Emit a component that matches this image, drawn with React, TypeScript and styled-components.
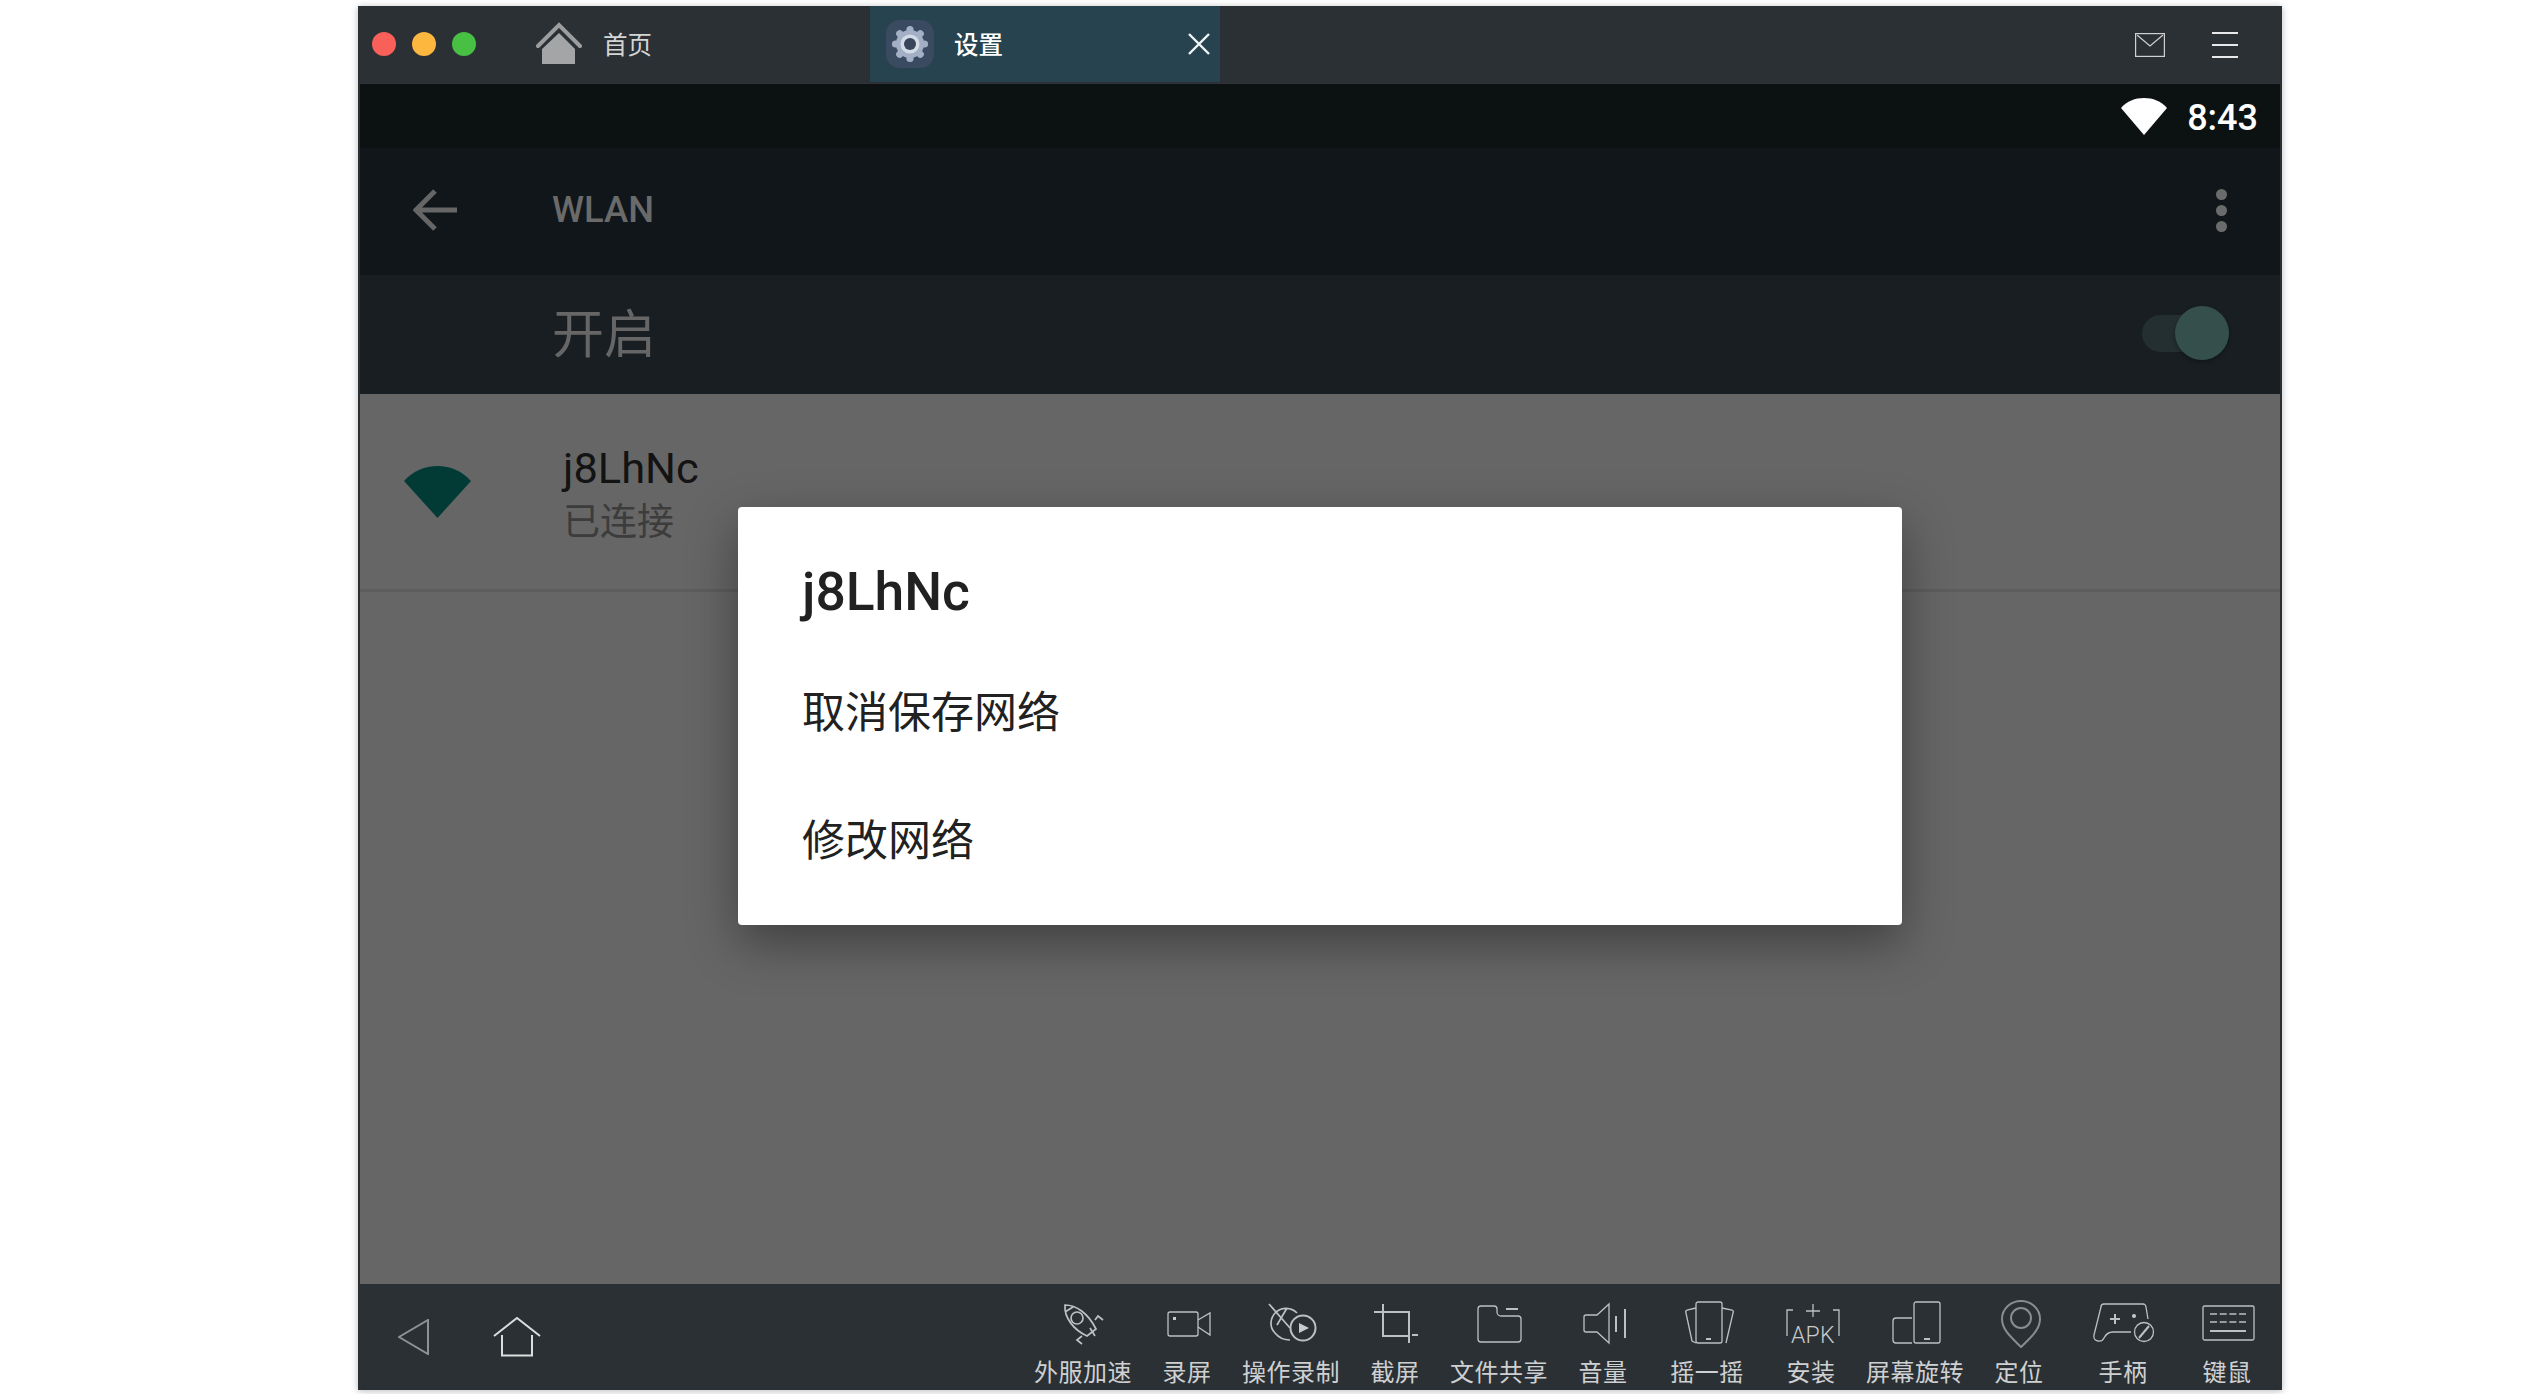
import React from "react";
import styled, { createGlobalStyle } from "styled-components";

const Global = createGlobalStyle`
  html, body { margin: 0; padding: 0; background: #fff; }
  body { font-family: Roboto, "Noto Sans CJK SC", sans-serif; }
  * { box-sizing: border-box; }
`;

const Page = styled.div`
  width: 2530px;
  height: 1394px;
  padding: 6px 0 4px 358px;
  overflow: hidden;
`;
const Window = styled.div`
  width: 1924px;
  height: 1384px;
  display: flex;
  flex-direction: column;
  background: #2b3035;
  padding: 0 2px;
  box-shadow: 0 1px 7px rgba(0, 0, 0, 0.28);
`;
const TitleBar = styled.header`
  height: 78px;
  margin: 0 -2px;
  display: flex;
  align-items: flex-start;
  background: #2b3035;
  border-bottom: 1px solid #313539;
  flex: none;
`;
const Lights = styled.div`
  display: flex;
  gap: 16px;
  padding: 26px 0 0 14px;
  width: 178px;
  flex: none;
`;
const Light = styled.span<{ $color: string }>`
  width: 24px;
  height: 24px;
  border-radius: 50%;
  background: ${(p) => p.$color};
`;
const HomeTab = styled.div`
  width: 334px;
  height: 77px;
  display: flex;
  align-items: center;
  gap: 21px;
  color: #d4d5d6;
  font: 400 24.5px/30px "Noto Sans CJK SC", sans-serif;
  padding-bottom: 1px;
  flex: none;
`;
const ActiveTab = styled.div`
  width: 350px;
  height: 76px;
  display: flex;
  align-items: center;
  background: #284350;
  color: #fff;
  font: 500 24.5px/30px "Noto Sans CJK SC", sans-serif;
  padding: 0 9px 0 16px;
  flex: none;
  svg:first-child { margin-right: 20px; }
`;
const TabLabel = styled.span`
  flex: 1;
`;
const TitleActions = styled.div`
  margin-left: auto;
  height: 77px;
  padding-right: 44px;
  display: flex;
  align-items: center;
  gap: 47px;
`;
const MenuIcon = styled.div`
  width: 26px;
  height: 26px;
  display: flex;
  flex-direction: column;
  justify-content: space-between;
  span { height: 2px; background: #e8e8e8; }
`;
const StatusBar = styled.div`
  height: 64px;
  background: #0c1112;
  display: flex;
  align-items: center;
  justify-content: flex-end;
  gap: 20px;
  padding-right: 22px;
  color: #fff;
  font: 500 36px/42px Roboto, sans-serif;
  flex: none;
`;
const StatusTime = styled.span`
  position: relative;
  top: 2px;
`;
const ActionBar = styled.div`
  height: 127px;
  background: #101619;
  display: flex;
  align-items: center;
  color: #6a6a6a;
  font: 500 36.4px/42px Roboto, sans-serif;
  flex: none;
  padding-bottom: 3px;
`;
const BackSlot = styled.div`
  width: 192px;
  padding-left: 53px;
  display: flex;
  flex: none;
`;
const Dots = styled.div`
  margin-left: auto;
  margin-right: 53px;
  display: flex;
  flex-direction: column;
  gap: 5px;
  span { width: 11px; height: 11px; border-radius: 50%; background: #6b6b6b; }
`;
const SwitchRow = styled.div`
  height: 119px;
  background: #181e22;
  display: flex;
  align-items: center;
  padding-left: 192px;
  color: #666;
  font: 400 52px/64px "Noto Sans CJK SC", sans-serif;
  flex: none;
`;
const SwitchLabel = styled.span`
  position: relative;
  top: -4px;
`;
const Switch = styled.div`
  margin-left: auto;
  margin-right: 51px;
  margin-top: -3px;
  width: 87px;
  height: 54px;
  display: flex;
  align-items: center;
  position: relative;
`;
const Track = styled.div`
  width: 60px;
  height: 37px;
  border-radius: 19px;
  background: #232f30;
`;
const Thumb = styled.div`
  position: absolute;
  right: 0;
  top: 0;
  width: 54px;
  height: 54px;
  border-radius: 50%;
  background: #35504c;
  box-shadow: 0 2px 4px rgba(0, 0, 0, 0.3);
`;
const Content = styled.main`
  flex: 1;
  position: relative;
  background: #666;
`;
const NetworkRow = styled.div`
  height: 198px;
  border-bottom: 3px solid #5d5d5d;
  display: flex;
  align-items: center;
  padding-left: 44px;
  gap: 92px;
`;
const NetworkText = styled.div`
  display: flex;
  flex-direction: column;
  padding-top: 6px;
`;
const NetworkName = styled.div`
  color: #131313;
  font: 400 43.4px/48px Roboto, sans-serif;
`;
const NetworkState = styled.div`
  color: #3c3c3c;
  font: 400 37px/52px "Noto Sans CJK SC", sans-serif;
`;
const Dialog = styled.div`
  position: absolute;
  left: 378px;
  top: 113px;
  width: 1164px;
  height: 418px;
  background: #fff;
  border-radius: 4px;
  box-shadow: 0 18px 50px rgba(0, 0, 0, 0.38);
  padding: 53px 64px 0;
`;
const DialogTitle = styled.h2`
  margin: 0 0 20.5px;
  color: #212121;
  font: 500 53.4px/64px Roboto, sans-serif;
`;
const DialogItem = styled.div`
  height: 128px;
  display: flex;
  align-items: center;
  color: #212121;
  font: 400 43px/60px "Noto Sans CJK SC", sans-serif;
`;
const BottomBar = styled.footer`
  height: 106px;
  margin: 0 -2px;
  padding-right: 3px;
  display: flex;
  background: #2b3035;
  flex: none;
`;
const Nav = styled.div`
  display: flex;
  align-items: center;
  gap: 63px;
  padding: 0 0 0 40px;
`;
const Tools = styled.div`
  margin-left: auto;
  display: flex;
`;
const Tool = styled.div`
  width: 104px;
  padding-top: 16px;
  display: flex;
  flex-direction: column;
  align-items: center;
  gap: 8px;
  color: #cfd0d1;
  font: 400 24px/30px "Noto Sans CJK SC", sans-serif;
  letter-spacing: 0.55px;
  white-space: nowrap;
`;
const ToolIcon = styled.svg`
  width: 104px;
  height: 48px;
  fill: none;
  stroke: #bfc0c1;
  stroke-width: 1.3;
  flex: none;
`;
const ApkText = styled.text`
  fill: #c9cacb;
  stroke: none;
  font: 300 23px Roboto, sans-serif;
`;

const icons: React.ReactNode[] = [
  <g strokeWidth="1.7">
    <path d="M34 5C45 5 57 13 65 29L56 36C43 30 33 18 34 5ZM34 12L42 7" />
    <circle cx="46" cy="18" r="6" />
    <path d="M64 20L67 16L72 20M51 36L46 40L51 44M59 28L64 36" />
  </g>,
  <>
    <rect x="33" y="12" width="30" height="24" rx="2" />
    <path d="M63 20L75 13V35L63 27" />
    <rect x="38" y="17" width="3" height="3" fill="#c9cacb" stroke="none" />
  </>,
  <g strokeWidth="1.7">
    <path d="M30 4L51 28M37 12C31 18 30 27 36 33C40 38 46 40 51 40M37 12C43 7 52 7 58 13M48 8L38 25" />
    <circle cx="64" cy="28" r="12.5" strokeWidth="2" />
    <path d="M60 23L70 28L60 33Z" fill="#c9cacb" stroke="none" />
  </g>,
  <path d="M31 12H67M40 4V36H66M66 12V43M69 35H75" strokeWidth="2" />,
  <>
    <path d="M31 9A3 3 0 0 1 34 6H47A3 3 0 0 1 50 9V12A4 4 0 0 0 54 16H71A3 3 0 0 1 74 19V39A3 3 0 0 1 71 42H34A3 3 0 0 1 31 39Z" />
    <path d="M59 9H71" strokeWidth="2" />
  </>,
  <>
    <path d="M58 4L46 15H35A2 2 0 0 0 33 17V30A2 2 0 0 0 35 32H46L58 43Z" />
    <path d="M65 16V32M74 9V38" strokeWidth="2" />
  </>,
  <>
    <rect x="41" y="2" width="26" height="41" rx="2" />
    <path d="M41 8L32 10Q30 11 31 13L37 41L41 43M67 8L77 10Q79 11 78 13L71 43" />
    <path d="M51 39H56" strokeWidth="2" />
  </>,
  <>
    <path d="M34 10H28V36M74 10H80V36M54 4V17M47 11H61" />
    <ApkText x="32" y="43" textLength="44">APK</ApkText>
  </>,
  <>
    <rect x="51" y="2" width="26" height="41" rx="2" />
    <path d="M49 18H33A3 3 0 0 0 30 21V40A3 3 0 0 0 33 43H49" />
    <path d="M61 39H67" strokeWidth="2" />
  </>,
  <>
    <path d="M54 47C45 38 35 30 35 19A19 18 0 0 1 73 19C73 30 63 38 54 47Z" stroke="#8a8c8e" strokeWidth="2" />
    <circle cx="54" cy="18" r="10" stroke="#8a8c8e" strokeWidth="2" />
  </>,
  <>
    <path d="M77 19L75 7A3 3 0 0 0 72 4H33A3 3 0 0 0 30 7L23 35Q22 40 27 41Q31 42 33 38Q36 32 42 32H60" />
    <path d="M39 19H49M44 14V24" strokeWidth="2" />
    <circle cx="63" cy="16" r="2" fill="#c9cacb" stroke="none" />
    <circle cx="73" cy="32" r="9.5" />
    <path d="M68 38L78 26" strokeWidth="2" />
  </>,
  <>
    <rect x="28" y="6" width="51" height="34" rx="1.5" />
    <path d="M35 14H71M35 22H71" strokeDasharray="7 2.7" strokeWidth="1.6" />
    <path d="M35 31H71" strokeWidth="2" />
  </>,
];

const labels = ["外服加速", "录屏", "操作录制", "截屏", "文件共享", "音量", "摇一摇", "安装", "屏幕旋转", "定位", "手柄", "键鼠"];

const gearTeeth = Array.from({ length: 8 }, (_, i) => i * 45);

export default function App() {
  return (
    <Page>
      <Global />
      <Window>
        <TitleBar>
          <Lights>
            <Light $color="#f9605a" />
            <Light $color="#fdb63e" />
            <Light $color="#47c043" />
          </Lights>
          <HomeTab>
            <svg width="46" height="44" viewBox="0 0 46 44">
              <path d="M2 24L23 3L44 24" fill="none" stroke="#9b9d9e" strokeWidth="4" strokeLinecap="round" />
              <path d="M23 11L39 27V42H6V27Z" fill="#a3a5a6" />
            </svg>
            首页
          </HomeTab>
          <ActiveTab>
            <svg width="48" height="48" viewBox="0 0 48 48">
              <rect width="48" height="48" rx="14" fill="#3a4a60" />
              {gearTeeth.map((a) => (
                <circle key={a} cx="24" cy="9.5" r="3.6" fill="#a3afc4" transform={`rotate(${a} 24 24)`} />
              ))}
              <circle cx="24" cy="24" r="14" fill="#a3afc4" />
              <circle cx="24" cy="24" r="9.5" fill="#d3dbe8" />
              <circle cx="24" cy="24" r="6" fill="#37445a" />
            </svg>
            <TabLabel>设置</TabLabel>
            <svg width="24" height="24" viewBox="0 0 24 24">
              <path d="M2 2L22 22M22 2L2 22" stroke="#f2f5f6" strokeWidth="2.4" />
            </svg>
          </ActiveTab>
          <TitleActions>
            <svg width="30" height="24" viewBox="0 0 30 24" fill="none" stroke="#cfd0d1" strokeWidth="1.2">
              <rect x="0.6" y="0.6" width="28.8" height="22.8" />
              <path d="M2 2L15 13L28 2" />
            </svg>
            <MenuIcon>
              <span />
              <span />
              <span />
            </MenuIcon>
          </TitleActions>
        </TitleBar>
        <StatusBar>
          <svg width="46" height="37" viewBox="0 0 46 37">
            <path d="M23 37L0 10C6 3 14 0 23 0S40 3 46 10Z" fill="#fff" />
          </svg>
          <StatusTime>8:43</StatusTime>
        </StatusBar>
        <ActionBar>
          <BackSlot>
            <svg width="44" height="42" viewBox="0 0 44 42" fill="none" stroke="#666" strokeWidth="5">
              <path d="M44 21H4M22 2L3 21L22 40" />
            </svg>
          </BackSlot>
          WLAN
          <Dots>
            <span />
            <span />
            <span />
          </Dots>
        </ActionBar>
        <SwitchRow>
          <SwitchLabel>开启</SwitchLabel>
          <Switch>
            <Track />
            <Thumb />
          </Switch>
        </SwitchRow>
        <Content>
          <NetworkRow>
            <svg width="67" height="52" viewBox="0 0 67 52">
              <path d="M33.5 52L0 15C9 5 21 0 33.5 0S58 5 67 15Z" fill="#023b36" />
            </svg>
            <NetworkText>
              <NetworkName>j8LhNc</NetworkName>
              <NetworkState>已连接</NetworkState>
            </NetworkText>
          </NetworkRow>
          <Dialog>
            <DialogTitle>j8LhNc</DialogTitle>
            <DialogItem>取消保存网络</DialogItem>
            <DialogItem>修改网络</DialogItem>
          </Dialog>
        </Content>
        <BottomBar>
          <Nav>
            <svg width="32" height="36" viewBox="0 0 32 36" fill="none" stroke="#8f9193" strokeWidth="2">
              <path d="M30 1V35L1 18Z" />
            </svg>
            <svg width="48" height="40" viewBox="0 0 48 40" fill="none" stroke="#dcdddd" strokeWidth="2">
              <path d="M1 19L24 1L47 19M9 18V38.5H39V18" />
            </svg>
          </Nav>
          <Tools>
            {labels.map((label, i) => (
              <Tool key={label}>
                <ToolIcon viewBox="0 0 104 48">{icons[i]}</ToolIcon>
                {label}
              </Tool>
            ))}
          </Tools>
        </BottomBar>
      </Window>
    </Page>
  );
}
